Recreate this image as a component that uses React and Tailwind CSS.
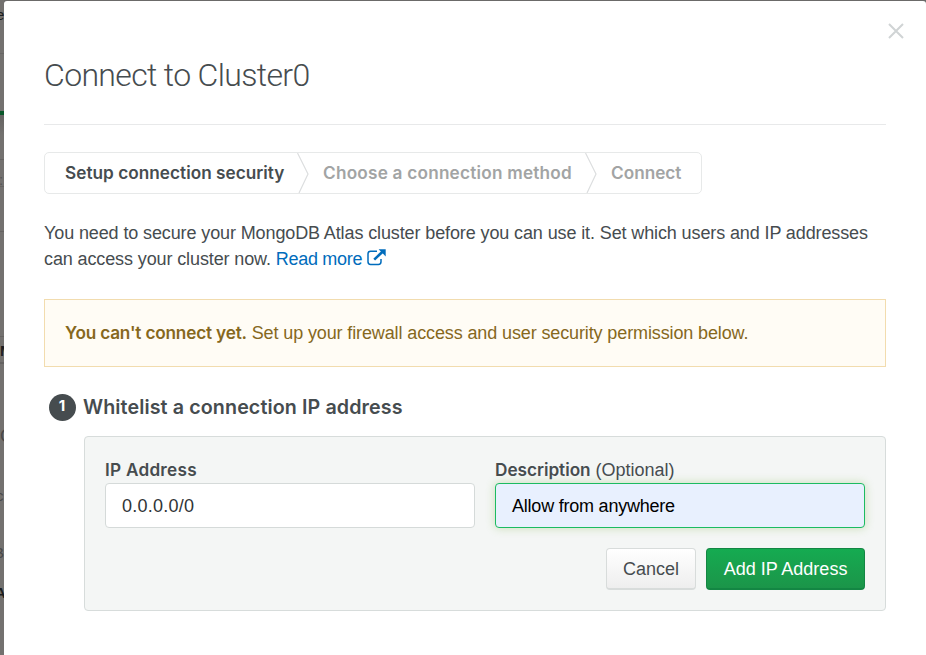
import React from "react";

function CloseIcon() {
  return (
    <svg width="16" height="16" viewBox="0 0 16 16" fill="none" stroke="#d0d4d5" strokeWidth="2">
      <path d="M1 1 L15 15 M15 1 L1 15" />
    </svg>
  );
}

function ExternalIcon() {
  return (
    <svg className="ml-[5px] inline-block align-[-1px]" width="19" height="17" viewBox="0 0 19 17" fill="none">
      <path d="M10 2.2 H3.6 A2.6 2.6 0 0 0 1 4.8 V12.8 A2.6 2.6 0 0 0 3.6 15.4 H11.4 A2.6 2.6 0 0 0 14 12.8 V10" stroke="#006cbc" strokeWidth="1.5" />
      <path d="M7.2 10.6 L15.5 2.8" stroke="#006cbc" strokeWidth="2.6" />
      <path d="M11.6 0.3 H18.7 V7.4 Z" fill="#006cbc" />
    </svg>
  );
}

function StepArrow() {
  return (
    <svg className="shrink-0" width="12" height="40" viewBox="0 0 12 40" fill="none" stroke="#dcdedf" strokeWidth="1.2">
      <path d="M0.5 0 L11 21 L2 40" />
    </svg>
  );
}

function Backdrop() {
  return (
    <div className="h-full w-1 shrink-0 overflow-hidden bg-[#73716f] text-[15px] leading-none text-[#1c1e20]">
      <div className="h-[54px] border-b border-[#686665] pt-[7px]"><span className="-ml-1">e</span></div>
      <div className="h-[57px]" />
      <div className="h-1 bg-[#09572a]" />
      <div className="h-11 bg-gradient-to-b from-[#656362] to-[#73716f] [background-size:100%_20px] bg-no-repeat" />
      <div className="h-7 border-y border-[#656362] pt-3 text-[#555]"><span className="-ml-px">:</span></div>
      <div className="h-[45px] border-b border-[#656362]" />
      <div className="h-[105px] border-b border-[#656362]" />
      <div className="h-[27px] border-b-2 border-[#646261] pt-[6px] font-bold"><span>M</span></div>
      <div className="h-[64px] pt-[63px] text-[18px] text-[#484848]"><span>C</span></div>
      <div className="h-[60px] pt-[60px] text-[#484848]"><span className="-ml-1">c</span></div>
      <div className="h-[57px] pt-[57px] text-[#484848]"><span className="-ml-1.5">B</span></div>
      <div className="h-[40px] pt-[40px] font-bold"><span className="-ml-[5px]">A</span></div>
    </div>
  );
}

export default function App() {
  return (
    <div className="flex h-[655px] w-[926px] overflow-hidden bg-[#6b6a69] font-['Liberation_Sans',Arial,sans-serif] text-[18px] text-[#464c4f]">
      <Backdrop />
      <main className="mt-px h-[654px] flex-1 rounded-t-[3px] bg-white pl-10">
        <div className="flex h-[46px] justify-end pr-[22px] pt-[22px]">
          <CloseIcon />
        </div>
        <div className="w-[842px]">
          <h1 className="h-[78px] border-b border-[#e8e9ea] pt-2 font-[Roboto] text-[32px] font-light leading-10 tracking-[-0.65px]">
            Connect to Cluster0
          </h1>

          <div className="mt-[27px] flex h-[42px] w-[658px] items-center rounded-[5px] border border-[#e7e9e9] font-[Inter] text-[17.2px] font-semibold leading-10 text-[#a2a4a4]">
            <span className="w-[252px] whitespace-nowrap pl-5 tracking-[0.03px] text-[#464c4f]">Setup connection security</span>
            <StepArrow />
            <span className="w-[276px] whitespace-nowrap pl-[14px] tracking-[0.22px]">Choose a connection method</span>
            <StepArrow />
            <span className="pl-[14px]">Connect</span>
          </div>

          <p className="mt-[26px] whitespace-nowrap leading-[26px] tracking-[-0.115px]">
            You need to secure your MongoDB Atlas cluster before you can use it. Set which users and IP addresses
            <br />
            can access your cluster now. <a className="tracking-[-0.3px] text-[#006cbc]">Read more</a>
            <ExternalIcon />
          </p>

          <div className="mt-[27px] flex h-[68px] items-center border border-[#f2dcae] bg-[#fffcf5] pl-5 text-[#86681d]">
            <p className="whitespace-nowrap leading-[26px] tracking-[-0.12px]">
              <strong className="font-[Inter] text-[17.2px] font-semibold tracking-[-0.18px]">You can't connect yet.</strong> Set up your firewall access and user security permission below.
            </p>
          </div>

          <div className="mt-[26px] flex h-7 items-center pl-[5px]">
            <span className="flex h-[27px] w-[27px] items-center justify-center rounded-full bg-[#464c4f] pb-px pr-px font-[Inter] text-[15px] font-bold text-white">1</span>
            <h2 className="ml-[7px] pt-0.5 font-[Inter] text-[19.7px] font-semibold tracking-[0.1px]">Whitelist a connection IP address</h2>
          </div>

          <section className="ml-10 mt-[15px] h-[175px] rounded-[4px] border border-[#d7dcdb] bg-[#f4f6f5] px-5 pt-5">
            <div className="flex gap-5">
              <div className="w-[370px]">
                <div className="h-[26px] font-[Inter] text-[17.2px] font-semibold leading-[26px] tracking-[0.25px]">IP Address</div>
                <div className="flex h-[45px] items-center rounded-[4px] border border-[#d5dad9] bg-white pl-4 pt-0.5 tracking-[0.25px] text-[#303436]">0.0.0.0/0</div>
              </div>
              <div className="w-[370px]">
                <div className="h-[26px] leading-[26px]">
                  <span className="font-[Inter] text-[17.2px] font-semibold tracking-[-0.02px]">Description</span> (Optional)
                </div>
                <div className="flex h-[45px] items-center rounded-[4px] border border-[#1bbb61] bg-[#e8f0fe] pl-4 pt-0.5 tracking-[-0.22px] text-black shadow-[0_0_10px_rgba(110,170,50,0.32)]">Allow from anywhere</div>
              </div>
            </div>
            <div className="mt-5 flex justify-end gap-[10px]">
              <button className="h-[42px] w-[90px] rounded-[4px] border border-b-2 border-[#d8dcdb] bg-gradient-to-b from-white to-[#eeeeee] pt-0.5">Cancel</button>
              <button className="h-[42px] w-[159px] rounded-[4px] border border-b-2 border-[#138643] bg-gradient-to-b from-[#15ab51] to-[#1b9549] pt-0.5 text-white">Add IP Address</button>
            </div>
          </section>
        </div>
      </main>
    </div>
  );
}
